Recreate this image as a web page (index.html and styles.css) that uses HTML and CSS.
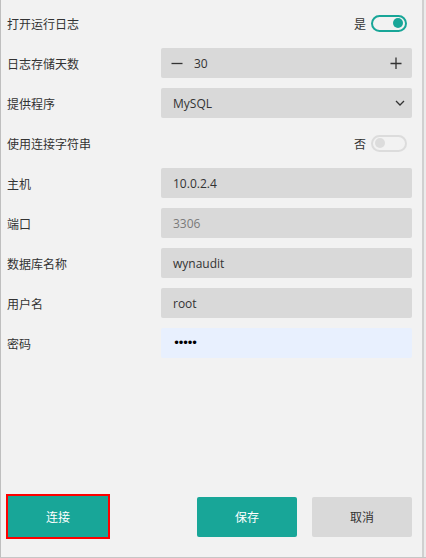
FILE: index.html
```html
<!DOCTYPE html>
<html lang="zh">
<head>
<meta charset="utf-8">
<link rel="stylesheet" href="styles.css">
</head>
<body>
<div class="frame">
  <div class="panel">
    <div class="form">
      <div class="row">
        <div class="label">打开运行日志</div>
        <div class="control toggle-wrap">
          <span class="toggle-text">是</span>
          <span class="toggle on"><span class="knob"></span></span>
        </div>
      </div>
      <div class="row">
        <div class="label">日志存储天数</div>
        <div class="control box number">
          <svg class="ico minus" width="12" height="12" viewBox="0 0 12 12"><path d="M0.5 6.5H11.5" stroke="#333" stroke-width="1.3"/></svg>
          <span class="num">30</span>
          <svg class="ico plus" width="12" height="12" viewBox="0 0 12 12"><path d="M0.5 6.5H11.5M6 0.5V12" stroke="#333" stroke-width="1.3"/></svg>
        </div>
      </div>
      <div class="row">
        <div class="label">提供程序</div>
        <div class="control box select">
          <span class="val">MySQL</span>
          <svg class="chev" width="10" height="6" viewBox="0 0 10 6"><path d="M1 1L5 5L9 1" fill="none" stroke="#333" stroke-width="1.3"/></svg>
        </div>
      </div>
      <div class="row">
        <div class="label">使用连接字符串</div>
        <div class="control toggle-wrap">
          <span class="toggle-text">否</span>
          <span class="toggle off"><span class="knob"></span></span>
        </div>
      </div>
      <div class="row">
        <div class="label">主机</div>
        <div class="control box"><span class="val">10.0.2.4</span></div>
      </div>
      <div class="row">
        <div class="label">端口</div>
        <div class="control box"><span class="val muted">3306</span></div>
      </div>
      <div class="row">
        <div class="label">数据库名称</div>
        <div class="control box"><span class="val">wynaudit</span></div>
      </div>
      <div class="row">
        <div class="label">用户名</div>
        <div class="control box"><span class="val">root</span></div>
      </div>
      <div class="row">
        <div class="label">密码</div>
        <div class="control box pwd"><span class="dots">•••••</span></div>
      </div>
    </div>
    <div class="actions">
      <button class="btn primary focused">连接</button>
      <div class="right-btns">
        <button class="btn primary">保存</button>
        <button class="btn secondary">取消</button>
      </div>
    </div>
  </div>
  <div class="scroll"></div>
</div>
</body>
</html>
```

FILE: styles.css
```css
html, body {
  margin: 0;
  padding: 0;
  background: #f2f2f2;
}
body {
  font-family: "Open Sans", "Noto Sans CJK SC", sans-serif;
  font-size: 12px;
  color: #333;
}
.frame {
  width: 426px;
  height: 558px;
  box-sizing: border-box;
  border-left: 1px solid #bfbfbf;
  border-bottom: 1px solid #c6c6c6;
  display: flex;
}
.panel {
  flex: 1;
  display: flex;
  flex-direction: column;
  justify-content: space-between;
  padding: 8px 10px 20px 6px;
}
.scroll {
  width: 4px;
  border-left: 2px solid #d0d0d0;
  box-sizing: border-box;
  background: #ececec;
}
.form {
  display: flex;
  flex-direction: column;
  gap: 10px;
}
.row {
  display: flex;
  align-items: center;
  height: 30px;
}
.label {
  width: 154px;
  font-family: "Noto Sans CJK SC", sans-serif;
  font-size: 12px;
  color: #333;
}
.control {
  width: 251px;
  height: 30px;
  box-sizing: border-box;
}
.box {
  background: #d9d9d9;
  border-radius: 2px;
  display: flex;
  align-items: center;
  padding: 0 12px;
}
.val {
  font-size: 12px;
  color: #333;
}
.muted {
  color: #7a7a7a;
}
.number {
  padding: 0 10px;
}
.num {
  margin-left: 11px;
  flex: 1;
}
.select {
  justify-content: space-between;
  padding-right: 7px;
}
.pwd {
  background: #e8f0fe;
}
.dots {
  font-family: "DejaVu Sans", sans-serif;
  font-size: 12px;
  letter-spacing: -2.6px;
  color: #000;
}
.toggle-wrap {
  display: flex;
  align-items: center;
  justify-content: flex-end;
  padding-right: 5px;
  gap: 5px;
}
.toggle-text {
  font-family: "Noto Sans CJK SC", sans-serif;
  font-size: 12px;
  color: #333;
}
.toggle {
  width: 36px;
  height: 17px;
  box-sizing: border-box;
  border-radius: 9px;
  border: 2px solid #18a698;
  display: flex;
  align-items: center;
  padding: 0 2px;
}
.toggle .knob {
  width: 10px;
  height: 10px;
  border-radius: 50%;
  background: #18a698;
}
.toggle.on {
  justify-content: flex-end;
  background: #f2f2f2;
}
.toggle.off {
  border-color: #dcdcdc;
  background: #f2f2f2;
}
.toggle.off .knob {
  background: #dcdcdc;
}
.actions {
  display: flex;
  justify-content: space-between;
  align-items: center;
}
.right-btns {
  display: flex;
  gap: 15px;
}
.btn {
  width: 100px;
  height: 40px;
  border: none;
  border-radius: 2px;
  font-family: "Noto Sans CJK SC", sans-serif;
  font-size: 12px;
  padding: 0;
}
.primary {
  background: #18a698;
  color: #fff;
}
.secondary {
  background: #d9d9d9;
  color: #333;
}
.focused {
  margin-left: 1px;
  width: 100px;
  height: 41px;
  border-radius: 0;
  box-shadow: 0 0 0 2px #ff0000;
}
```
